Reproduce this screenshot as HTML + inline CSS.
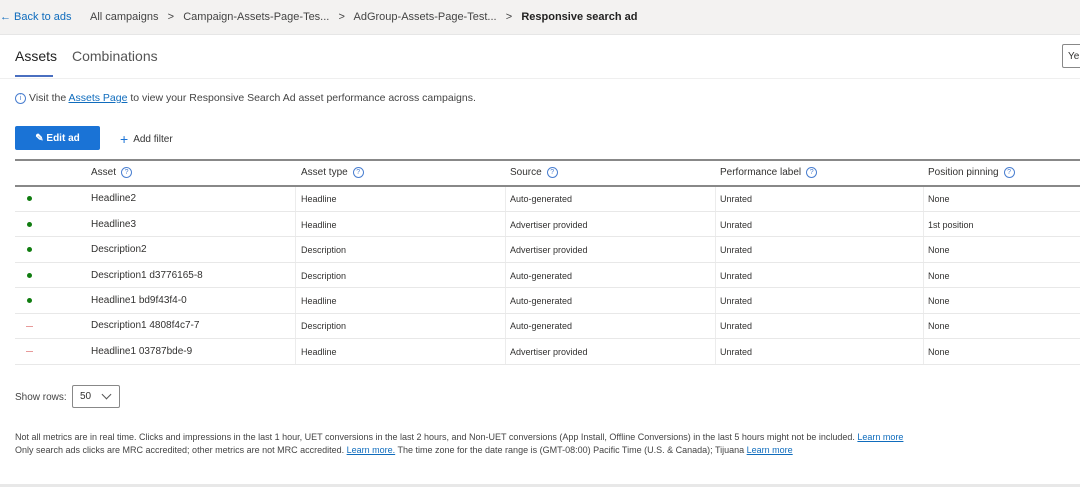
<!DOCTYPE html>
<html><head><style>
body{margin:0;width:1080px;height:487px;overflow:hidden;background:#fff;font-family:"Liberation Sans",sans-serif;color:#323130;position:relative}
.a{position:absolute;white-space:nowrap}
.bc{position:absolute;left:0;top:0;width:1080px;height:34px;background:#f3f2f1;border-bottom:1px solid #e6e6e6}
.q{display:inline-block;width:9px;height:9px;border:1px solid #4a7fd0;border-radius:50%;font-size:7px;line-height:9px;text-align:center;color:#4a7fd0;margin-left:5px;vertical-align:1px}
.hl{position:absolute;left:15px;width:1065px;height:1px;background:#e8e8e8}
.cell{position:absolute;font-size:9px;color:#323130;line-height:12px}
.nm{font-size:10px}
.sep{position:absolute;width:1px;background:#ececec;top:187px;height:177px}
.dot{position:absolute;left:27px;width:5px;height:5px;border-radius:50%;background:#107c10}
.dash{position:absolute;left:26px;width:7px;height:1px;background:#e79a9a}
a{color:#0f6cbd;text-decoration:underline}
</style></head><body>
<div class="bc"></div>
<div class="a" style="left:0;top:11px;font-size:11px;color:#0f6cbd">&larr; Back to ads</div>
<div class="a" style="left:90px;top:11px;font-size:11px;color:#444">All campaigns &nbsp;&nbsp;&gt;&nbsp;&nbsp; Campaign-Assets-Page-Tes... &nbsp;&nbsp;&gt;&nbsp;&nbsp; AdGroup-Assets-Page-Test... &nbsp;&nbsp;&gt;&nbsp;&nbsp; <b style="color:#222">Responsive search ad</b></div>
<div class="a" style="left:15px;top:48px;font-size:14px;color:#222">Assets</div>
<div class="a" style="left:72px;top:48px;font-size:14px;color:#555">Combinations</div>
<div class="a" style="left:15px;top:75px;width:38px;height:2px;background:#4a6fc0"></div>
<div class="a" style="left:0;top:78px;width:1080px;height:1px;background:#efefef"></div>
<div class="a" style="left:1062px;top:44px;width:30px;height:24px;border:1px solid #888;border-radius:2px;font-size:10px;line-height:24px;padding-left:5px;box-sizing:border-box">Ye</div>
<div class="a" style="left:15px;top:92px;font-size:10.5px;color:#444"><span class="q" style="margin:0 3px 0 0">i</span>Visit the <a>Assets Page</a> to view your Responsive Search Ad asset performance across campaigns.</div>
<div class="a" style="left:15px;top:126px;width:85px;height:24px;background:#1a73d6;border-radius:2px;color:#fff;font-size:10px;font-weight:bold;line-height:25px;text-align:center">&#9998; Edit ad</div>
<div class="a" style="left:120px;top:131px;font-size:10px;color:#333"><span style="color:#1a73d6;font-size:14px;vertical-align:-2px">+</span>&nbsp; Add filter</div>
<div class="a" style="left:15px;top:159px;width:1065px;height:2px;background:#888"></div>
<div class="a" style="left:15px;top:185px;width:1065px;height:2px;background:#888"></div>
<div class="cell nm" style="left:91px;top:167px">Asset<span class="q">?</span></div>
<div class="cell nm" style="left:301px;top:167px">Asset type<span class="q">?</span></div>
<div class="cell nm" style="left:510px;top:167px">Source<span class="q">?</span></div>
<div class="cell nm" style="left:720px;top:167px">Performance label<span class="q">?</span></div>
<div class="cell nm" style="left:928px;top:167px">Position pinning<span class="q">?</span></div>
<div class="sep" style="left:295px"></div><div class="sep" style="left:505px"></div><div class="sep" style="left:715px"></div><div class="sep" style="left:923px"></div>

<div class="dot" style="top:196px"></div><div class="cell nm" style="left:91px;top:193px">Headline2</div><div class="cell" style="left:301px;top:193px">Headline</div><div class="cell" style="left:510px;top:193px">Auto-generated</div><div class="cell" style="left:720px;top:193px">Unrated</div><div class="cell" style="left:928px;top:193px">None</div>
<div class="hl" style="top:211px"></div>
<div class="dot" style="top:222px"></div><div class="cell nm" style="left:91px;top:219px">Headline3</div><div class="cell" style="left:301px;top:219px">Headline</div><div class="cell" style="left:510px;top:219px">Advertiser provided</div><div class="cell" style="left:720px;top:219px">Unrated</div><div class="cell" style="left:928px;top:219px">1st position</div>
<div class="hl" style="top:236px"></div>
<div class="dot" style="top:247px"></div><div class="cell nm" style="left:91px;top:244px">Description2</div><div class="cell" style="left:301px;top:244px">Description</div><div class="cell" style="left:510px;top:244px">Advertiser provided</div><div class="cell" style="left:720px;top:244px">Unrated</div><div class="cell" style="left:928px;top:244px">None</div>
<div class="hl" style="top:262px"></div>
<div class="dot" style="top:273px"></div><div class="cell nm" style="left:91px;top:270px">Description1 d3776165-8</div><div class="cell" style="left:301px;top:270px">Description</div><div class="cell" style="left:510px;top:270px">Auto-generated</div><div class="cell" style="left:720px;top:270px">Unrated</div><div class="cell" style="left:928px;top:270px">None</div>
<div class="hl" style="top:287px"></div>
<div class="dot" style="top:298px"></div><div class="cell nm" style="left:91px;top:295px">Headline1 bd9f43f4-0</div><div class="cell" style="left:301px;top:295px">Headline</div><div class="cell" style="left:510px;top:295px">Auto-generated</div><div class="cell" style="left:720px;top:295px">Unrated</div><div class="cell" style="left:928px;top:295px">None</div>
<div class="hl" style="top:313px"></div>
<div class="dash" style="top:326px"></div><div class="cell nm" style="left:91px;top:320px">Description1 4808f4c7-7</div><div class="cell" style="left:301px;top:320px">Description</div><div class="cell" style="left:510px;top:320px">Auto-generated</div><div class="cell" style="left:720px;top:320px">Unrated</div><div class="cell" style="left:928px;top:320px">None</div>
<div class="hl" style="top:338px"></div>
<div class="dash" style="top:351px"></div><div class="cell nm" style="left:91px;top:346px">Headline1 03787bde-9</div><div class="cell" style="left:301px;top:346px">Headline</div><div class="cell" style="left:510px;top:346px">Advertiser provided</div><div class="cell" style="left:720px;top:346px">Unrated</div><div class="cell" style="left:928px;top:346px">None</div>
<div class="hl" style="top:364px"></div>

<div class="a" style="left:15px;top:392px;font-size:10px;color:#444">Show rows:</div>
<div class="a" style="left:72px;top:385px;width:48px;height:23px;border:1px solid #888;border-radius:2px;box-sizing:border-box;font-size:10px;line-height:21px;padding-left:7px">50 <span style="position:absolute;left:30px;top:5px;width:6px;height:6px;border-right:1px solid #555;border-bottom:1px solid #555;transform:rotate(45deg)"></span></div>
<div class="a" style="left:15px;top:432px;font-size:9px;color:#444">Not all metrics are in real time. Clicks and impressions in the last 1 hour, UET conversions in the last 2 hours, and Non-UET conversions (App Install, Offline Conversions) in the last 5 hours might not be included. <a>Learn more</a></div>
<div class="a" style="left:15px;top:445px;font-size:9px;color:#444">Only search ads clicks are MRC accredited; other metrics are not MRC accredited. <a>Learn more.</a> The time zone for the date range is (GMT-08:00) Pacific Time (U.S. &amp; Canada); Tijuana <a>Learn more</a></div>
<div class="a" style="left:0;top:484px;width:1080px;height:3px;background:#e8e8e8"></div>
</body></html>
